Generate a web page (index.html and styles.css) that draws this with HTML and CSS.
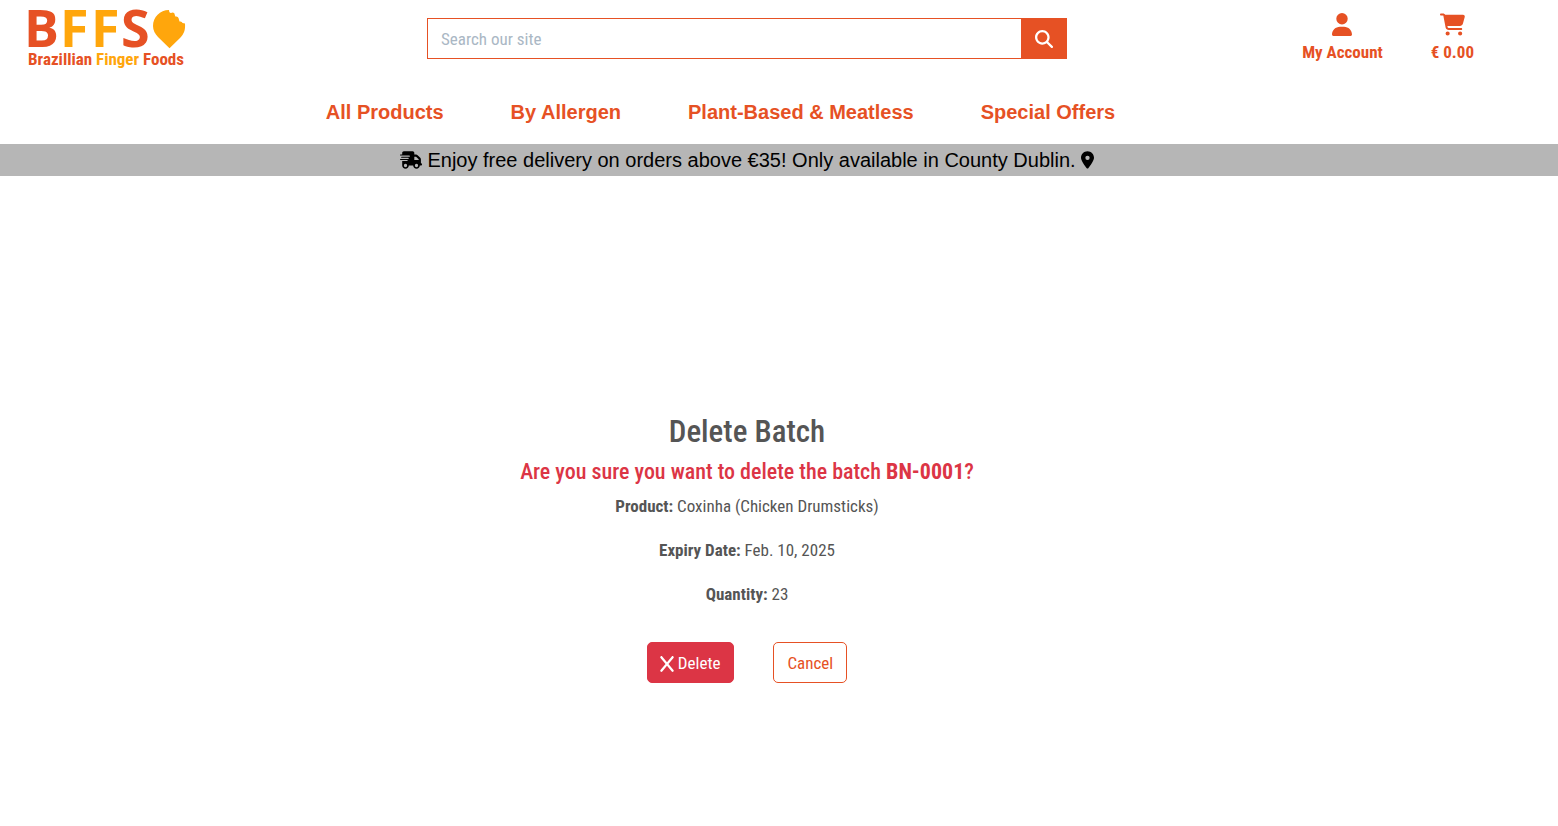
FILE: index.html
```html
<!DOCTYPE html>
<html lang="en">
<head>
<meta charset="utf-8">
<meta name="viewport" content="width=device-width, initial-scale=1">
<title>Delete Batch</title>
<link rel="stylesheet" href="styles.css">
</head>
<body>
<header>
  <div class="topbar">
    <a class="logo" href="#" aria-label="Brazillian Finger Foods home">
      <svg width="160" height="64" viewBox="0 0 160 64">
        <g class="logo-name">
          <text class="red" x="-4" y="40">B</text>
          <text class="gold" x="32" y="40">F</text>
          <text class="gold" x="63" y="40">F</text>
          <text class="red" x="93" y="40">S</text>
        </g>
        <path class="gold" d="M141 3 Q141 6 143 6 Q145 5 146.300 6.300 L147.300 9.500 Q150 9 150.500 11 L151.500 14.500 Q154 14 154.500 16 L157 16.500 C157.500 23 156 27 152 31 L141.500 41.300 L130 30 C127 27 125 23 125 19 C125 10 132 3 141 3Z"/>
        <text class="logo-tag" x="0" y="58"><tspan class="red">Brazillian </tspan><tspan class="gold">Finger </tspan><tspan class="red">Foods</tspan></text>
      </svg>
    </a>
    <form class="search">
      <input class="search-input" type="search" placeholder="Search our site" aria-label="Search our site">
      <button class="search-button" type="submit" aria-label="Search"><svg width="18" height="18" viewBox="0 0 512 512"><path d="M416 208c0 45.900-14.900 88.300-40 122.700L502.600 457.400c12.500 12.500 12.500 32.800 0 45.300s-32.800 12.500-45.300 0L330.700 376c-34.400 25.200-76.800 40-122.700 40C93.100 416 0 322.900 0 208S93.100 0 208 0S416 93.100 416 208zM208 352a144 144 0 1 0 0-288 144 144 0 1 0 0 288z"/></svg></button>
    </form>
    <div class="tools">
      <a class="tool" href="#"><svg width="20" height="23" viewBox="0 0 448 512"><path d="M224 256A128 128 0 1 0 224 0a128 128 0 1 0 0 256zm-45.700 48C79.800 304 0 383.800 0 482.300C0 498.700 13.300 512 29.700 512H418.300c16.400 0 29.700-13.300 29.700-29.700C448 383.800 368.200 304 269.700 304H178.300z"/></svg><span>My Account</span></a>
      <a class="tool" href="#"><svg width="25" height="23" viewBox="0 0 576 512"><path d="M0 24C0 10.700 10.700 0 24 0H69.500c22 0 41.500 12.800 50.600 32h411c26.300 0 45.500 25 38.600 50.400l-41 152.300c-8.500 31.400-37 53.300-69.500 53.300H170.700l5.400 28.500c2.200 11.300 12.100 19.500 23.600 19.500H488c13.300 0 24 10.700 24 24s-10.700 24-24 24H199.700c-34.600 0-64.300-24.600-70.700-58.500L77.400 54.500c-.7-3.800-4-6.500-7.900-6.500H24C10.700 48 0 37.300 0 24zM128 464a48 48 0 1 1 96 0 48 48 0 1 1 -96 0zm336-48a48 48 0 1 1 0 96 48 48 0 1 1 0-96z"/></svg><span>€ 0.00</span></a>
    </div>
  </div>
  <nav class="nav" aria-label="Main">
    <a href="#">All Products</a>
    <a href="#">By Allergen</a>
    <a href="#">Plant-Based &amp; Meatless</a>
    <a href="#">Special Offers</a>
  </nav>
  <div class="banner">
    <svg width="22" height="18" viewBox="0 0 640 512"><path d="M112 0C85.500 0 64 21.500 64 48V96H16c-8.800 0-16 7.200-16 16s7.200 16 16 16H64 272c8.800 0 16 7.200 16 16s-7.200 16-16 16H64 48c-8.800 0-16 7.200-16 16s7.200 16 16 16H64 240c8.800 0 16 7.200 16 16s-7.200 16-16 16H64 16c-8.800 0-16 7.200-16 16s7.200 16 16 16H64 208c8.800 0 16 7.200 16 16s-7.200 16-16 16H64V416c0 53 43 96 96 96s96-43 96-96H384c0 53 43 96 96 96s96-43 96-96h32c17.700 0 32-14.300 32-32s-14.300-32-32-32V288 256 237.300c0-17-6.700-33.300-18.700-45.300L512 114.700c-12-12-28.300-18.700-45.300-18.700H416V48c0-26.500-21.500-48-48-48H112zM544 237.300V256H416V160h50.700L544 237.300zM160 368a48 48 0 1 1 0 96 48 48 0 1 1 0-96zm272 48a48 48 0 1 1 96 0 48 48 0 1 1 -96 0z"/></svg>
    <span>Enjoy free delivery on orders above €35! Only available in County Dublin.</span>
    <svg width="13" height="18" viewBox="0 0 384 512"><path d="M215.700 499.200C267 435 384 279.400 384 192C384 86 298 0 192 0S0 86 0 192c0 87.400 117 243 168.300 307.200c12.300 15.300 35.100 15.300 47.400 0zM192 128a64 64 0 1 1 0 128 64 64 0 1 1 0-128z"/></svg>
  </div>
</header>
<main class="confirm">
  <h1>Delete Batch</h1>
  <h2>Are you sure you want to delete the batch <strong>BN-0001</strong>?</h2>
  <p><strong>Product:</strong> Coxinha (Chicken Drumsticks)</p>
  <p><strong>Expiry Date:</strong> Feb. 10, 2025</p>
  <p><strong>Quantity:</strong> 23</p>
  <form class="actions">
    <button class="btn btn-delete" type="submit"><svg width="14" height="18" viewBox="0 0 384 512"><path d="M376.600 84.500c11.300-13.600 9.500-33.800-4.100-45.100s-33.800-9.500-45.100 4.100L192 206 56.600 43.500C45.300 29.900 25.100 28.100 11.500 39.400S-3.900 70.900 7.400 84.500L150.300 256 7.400 427.500c-11.300 13.600-9.500 33.800 4.100 45.100s33.800 9.500 45.100-4.100L192 306 327.400 468.500c11.300 13.600 31.500 15.400 45.100 4.100s15.400-31.500 4.100-45.100L233.700 256 376.600 84.500z"/></svg>Delete</button>
    <a class="btn btn-cancel" href="#">Cancel</a>
  </form>
</main>
</body>
</html>
```
FILE: styles.css
```css
* { box-sizing: border-box; }
body {
  margin: 0;
  background: #fff;
  color: #555;
  font: 17px/27px "Roboto Condensed", "Liberation Sans Narrow", Roboto, sans-serif;
}
a { color: #e65124; text-decoration: none; }
svg { fill: currentColor; flex: none; }
.red { fill: #e65124; }
.gold { fill: #ffa60c; }

.topbar {
  display: grid;
  grid-template-columns: 1fr minmax(0, 640px) 1fr;
  align-items: start;
  padding: 7px 64px 0 0;
  height: 80px;
}
.logo { padding-left: 28px; }
.logo svg { display: block; overflow: visible; }
.logo-name { font: bold 52px "Open Sans", sans-serif; }
.logo-tag { font-size: 17px; font-weight: bold; }
.search { display: flex; margin-top: 11px; height: 41px; }
.search-input {
  flex: 1;
  min-width: 0;
  padding: 2px 13px 0;
  border: 1px solid #e65124;
  border-right: 0;
  border-radius: 0;
  appearance: none;
  outline: 0;
  background: #fff;
  font: inherit;
}
.search-input::placeholder { color: #aab7c4; opacity: 1; }
.search-button {
  display: grid;
  place-items: center;
  width: 46px;
  padding: 0;
  border: 0;
  background: #e65124;
  color: #fff;
}
.tools { display: flex; justify-content: flex-end; gap: 48px; padding: 6px 20px 0 0; }
.tool { display: flex; flex-direction: column; align-items: center; gap: 3px; font-weight: bold; }

.nav {
  display: flex;
  justify-content: center;
  gap: 67px;
  height: 64px;
  padding-right: 117px;
  font: bold 20px/64px "Liberation Sans", Arial, sans-serif;
}
.banner {
  display: flex;
  align-items: center;
  justify-content: center;
  gap: 5px;
  height: 32px;
  padding-right: 64px;
  background: #b6b6b6;
  color: #000;
  font: 20px/32px "Liberation Sans", Arial, sans-serif;
}

.confirm {
  display: flex;
  flex-direction: column;
  align-items: center;
  padding: 237px 64px 0 0;
}
h1, h2 { margin: 0 0 8px; font-weight: 500; }
h1 { margin-bottom: 7px; font-size: 31px; line-height: 38px; }
h2 { font-size: 22px; line-height: 27px; color: #dc3545; }
p { margin: 0 0 17px; }
.actions { display: flex; gap: 39px; margin-top: 17px; }
.btn {
  display: flex;
  align-items: center;
  gap: 4px;
  padding: 7px 13px 5px;
  border: 1px solid;
  border-radius: 5px;
  font: inherit;
}
.btn-delete { padding-left: 12px; border-color: #dc3545; background: #dc3545; color: #fff; }
.btn-cancel { border-color: #e65124; }
```
